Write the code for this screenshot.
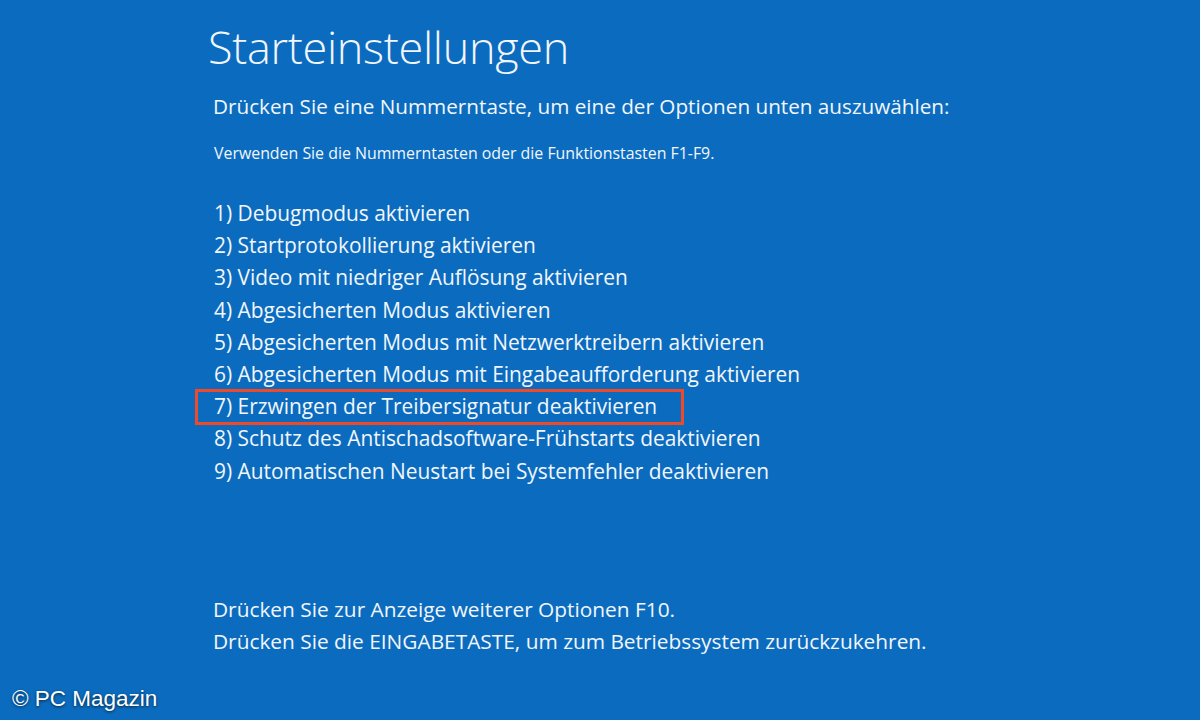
const options = [
  '1) Debugmodus aktivieren',
  '2) Startprotokollierung aktivieren',
  '3) Video mit niedriger Auflösung aktivieren',
  '4) Abgesicherten Modus aktivieren',
  '5) Abgesicherten Modus mit Netzwerktreibern aktivieren',
  '6) Abgesicherten Modus mit Eingabeaufforderung aktivieren',
  '7) Erzwingen der Treibersignatur deaktivieren',
  '8) Schutz des Antischadsoftware-Frühstarts deaktivieren',
  '9) Automatischen Neustart bei Systemfehler deaktivieren',
];

export default function App() {
  return (
    <div className="relative w-[1200px] h-[720px] overflow-hidden bg-[#0b6cbf] text-[#f2f6fb] font-['Open_Sans',sans-serif]">
      <div className="pl-[208px] pt-[22px]">
        <h1 className="text-[45px] font-light leading-[50px] tracking-[-0.3px]">Starteinstellungen</h1>
        <p className="mt-[21px] ml-[5px] text-[20.7px] leading-[26px]">
          Drücken Sie eine Nummerntaste, um eine der Optionen unten auszuwählen:
        </p>
        <p className="mt-[24px] ml-[6px] text-[15.9px] leading-[20px]">
          Verwenden Sie die Nummerntasten oder die Funktionstasten F1-F9.
        </p>
        <ul className="mt-[34px] ml-[6px]">
          {options.map((o, i) => (
            <li key={i} className="text-[20.9px] leading-[32.2px] relative">
              {i === 6 && (
                <span className="absolute left-[-19px] top-[-1px] w-[489px] h-[36px] border-[3px] border-[#ee4a2a]" />
              )}
              {o}
            </li>
          ))}
        </ul>
        <div className="mt-[106px] ml-[5px] text-[20.85px] leading-[32px]">
          <p>Drücken Sie zur Anzeige weiterer Optionen F10.</p>
          <p>Drücken Sie die EINGABETASTE, um zum Betriebssystem zurückzukehren.</p>
        </div>
      </div>
      <div className="absolute left-[12px] top-[682px] text-[22.5px] text-white font-['Liberation_Sans',sans-serif] [text-shadow:0_1px_3px_rgba(0,0,0,0.7)]">
        © PC Magazin
      </div>
    </div>
  );
}
